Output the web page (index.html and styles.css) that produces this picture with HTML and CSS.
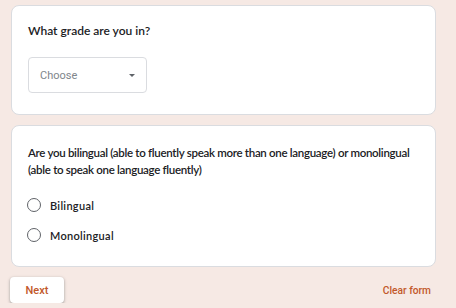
FILE: index.html
```html
<!DOCTYPE html>
<html lang="en">
  <head>
    <meta charset="UTF-8" />
    <meta name="viewport" content="width=device-width, initial-scale=1.0" />
    <title>Survey</title>
    <link rel="stylesheet" href="styles.css">
  </head>
  <body>
    <div class="form">
      <div class="card card-grade">
        <p class="question">What grade are you in?</p>
        <div class="select">
          <span>Choose</span>
          <span class="caret"></span>
        </div>
      </div>

      <div class="card card-lang">
        <p class="question question-long">Are you bilingual (able to fluently speak more than one language) or monolingual (able to speak one language fluently)</p>
        <div class="options">
          <label class="option"><span class="radio"></span>Bilingual</label>
          <label class="option"><span class="radio"></span>Monolingual</label>
        </div>
      </div>

      <div class="footer">
        <button class="next-button">Next</button>
        <button class="clear-button">Clear form</button>
      </div>
    </div>
  </body>
</html>
```

FILE: styles.css
```css
* {
  box-sizing: border-box;
  margin: 0;
  padding: 0;
}

body {
  background: #f6e9e4;
  font-family: Lato, "Noto Sans", sans-serif;
  color: #202124;
}

.form {
  width: 425px;
  margin: 5px 0 0 11px;
  display: flex;
  flex-direction: column;
  gap: 10px;
}

.card {
  background: #fff;
  border: 1px solid #dadce0;
  border-radius: 8px;
  padding: 16px 16px 0;
}

.card-grade {
  height: 110px;
}

.card-lang {
  height: 142px;
  padding-top: 18px;
}

.question {
  font-size: 12px;
  font-weight: 600;
  line-height: 17px;
}

.question-long {
  font-size: 11.5px;
  letter-spacing: -0.3px;
}

/* Dropdown */
.select {
  width: 119px;
  height: 36px;
  margin-top: 18px;
  border: 1px solid #dadce0;
  border-radius: 4px;
  display: flex;
  align-items: center;
  justify-content: space-between;
  padding: 0 11px 0 11px;
  font-family: Roboto, sans-serif;
  font-size: 11px;
  color: #80868b;
}

.caret {
  width: 0;
  height: 0;
  border-left: 3.5px solid transparent;
  border-right: 3.5px solid transparent;
  border-top: 3.5px solid #5f6368;
}

/* Radios */
.options {
  margin-top: 20px;
  display: flex;
  flex-direction: column;
  gap: 16px;
}

.option {
  display: flex;
  align-items: center;
  gap: 9px;
  font-size: 11px;
  font-weight: 600;
  letter-spacing: 0.3px;
  height: 14px;
}

.radio {
  width: 14px;
  height: 14px;
  border: 1.5px solid #5f6368;
  border-radius: 50%;
  margin-left: -1px;
}

/* Footer */
.footer {
  display: flex;
  justify-content: space-between;
  align-items: center;
}

.next-button {
  width: 54px;
  height: 26px;
  margin-left: -1px;
  background: #fff;
  border: none;
  border-radius: 4px;
  box-shadow: 0 1px 2px rgba(60, 64, 67, 0.3), 0 1px 3px 1px rgba(60, 64, 67, 0.15);
  font-family: Roboto, sans-serif;
  font-size: 11px;
  font-weight: 500;
  color: #c2582a;
}

.clear-button {
  background: none;
  border: none;
  margin-right: 5px;
  font-family: Roboto, sans-serif;
  font-size: 10.2px;
  font-weight: 500;
  color: #c2582a;
}
```
